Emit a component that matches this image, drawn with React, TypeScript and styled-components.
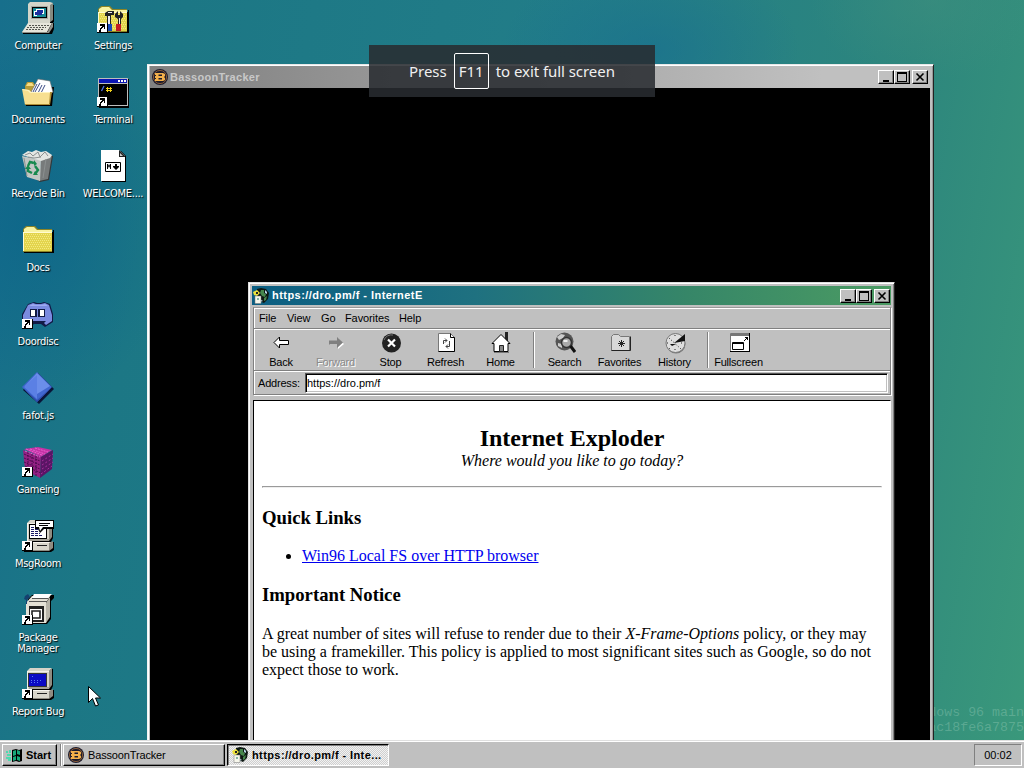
import * as React from 'react'
import styled, { createGlobalStyle, css } from 'styled-components'

const Shortcut: React.FunctionComponent = () => (
  <g>
    <path fill='#fff' d='M0 21h10v10H0z' />
    <path fill='#000' d='M3 22h5v5H7v-2H6v1H5v1H4v3H2v-2h1v-2h1v-1h1v-1H3zM0 31h11V21h-1v9H0z' />
  </g>
)

const ComputerIcon = (
  <>
    <path fill='#000' d='M28 3h4v17l-4 3H9v-2h17z' />
    <path fill='#868a80' d='M27 1h4v17l-4 3z' />
    <path fill='#d4d5c9' d='M8 0h20l3 1-3 2v18H6V2z' />
    <path fill='#a9aba2' d='M9 4h17v13H9z' />
    <path fill='#000' d='M10 5h15v11H10z' />
    <path fill='#178a96' d='M11 6h13v9H11z' />
    <path fill='#fff' d='M14 7h8v5h-8zM12 9h3v5h-3z' />
    <path fill='#1c2f9e' d='M15 8h6v3h-6zM13 10h7v3h-7z' />
    <path fill='#000' d='M28 21h4v6l-2 5H1v-2l24-1z' />
    <path fill='#e6e5da' d='M6 21h24l-5 9H0z' />
    <path fill='#8f9189' d='M30 21h1v4l-4 6h-2z' />
    <path stroke='#55574f' strokeDasharray='2 1' d='M7 23.500h20M5 25.500h19M4 27.500h17' />
    <path fill='#8f9189' d='M0 30h26v1H0z' />
  </>
)

const FolderShape = (
  <>
    <path fill='#000' d='M2 29V8h29V6h1v23z' />
    <path fill='#8c8426' d='M1 5l3-3h9l3 3h14v23H1z' />
    <path fill='#f9f3a1' d='M2 5l3-2h7l3 3h15v2H2z' />
    <path fill='#e3d44c' d='M2 8h28v19H2z' />
    <path fill='#fffbd0' d='M1 8h29v1H2v18H1z' />
    <path stroke='#f3ea80' strokeDasharray='1 1' d='M3 10.500h26M4 12.500h26M3 14.500h26M4 16.500h26M3 18.500h26M4 20.500h26M3 22.500h26M4 24.500h26' />
  </>
)

const SettingsIcon = (
  <>
    <g transform='translate(0 2)'>{FolderShape}</g>
    <path fill='#222' d='M8 11l3-2h6v4h-3v10h-4V14H8zM18 12l3-3v4h2V9l3 3v3l-2 2v7h-3v-7l-3-2z' />
    <path fill='#eee' d='M11 14h2v8h-2zM22 16h1v7h-1zM11 10h4v1h-4z' />
    <path fill='#1648b8' d='M11 22h4v7h-4z' />
    <path fill='#c21c26' d='M19 22h5v7h-5z' />
    <Shortcut />
  </>
)

const DocumentsIcon = (
  <>
    <path fill='#000' d='M4 30V14h26v-3h2l-2 19z' />
    <path fill='#b79c38' d='M3 10l2-4h6l2 3h15v18H4z' />
    <path fill='#f6dc83' d='M4 10l2-3h4l2 3z' />
    <path fill='#fff' stroke='#666' strokeWidth='.6' d='M9 16l7-13 12 2 3 11-7 5z' />
    <path stroke='#3c4c86' d='M15 8l-4 8M18 7l-5 9M20 9l-4 8M23 9l-4 8' />
    <path fill='#f7df90' d='M0 13l7 1 2 2h20l-2 13H3z' />
    <path fill='#fff4bf' d='M0 13l7 1 2 2h20v1H8l-2-2-5-1z' />
    <path fill='#b08f36' d='M3 28h25v1H3zM28 16h2l-2 13h-1z' />
  </>
)

const BinIcon = (
  <>
    <path fill='#33383a' d='M27 6h4l-4 24-9 2-3-2z' />
    <path fill='#777b7b' d='M19 9l11-4-4 24-9 2z' />
    <path fill='#c2c7c4' d='M0 6l19 4-1 21-13-4z' />
    <path fill='#e3e6e3' d='M0 5l6-4 4 1 4-2 5 2 5-1 6 4-2 3-9 3z' />
    <path stroke='#8b9090' fill='none' d='M3 5l5-2 3 3 5-4 2 5 5-5 3 4M6 7l6 1 7-1M2 8l3 18M24 9l-3 19' />
    <path fill='none' stroke='#17894e' strokeWidth='2.400' d='M6 16l2-4 4 1M13 16l3 4-3 4M10 23l-4-2 0-3' />
    <path fill='#17894e' d='M12 10v6l3-2zM16 25h-5l2-4zM3 19l3-4 3 4z' />
  </>
)

const FolderIcon = FolderShape

const DoorIcon = (
  <>
    <path fill='#111a45' d='M6 6l6-2 3 1h4l3-1 6 2 3 10v8l-8 5-4-3h-7l-4 3-8-5v-8z' />
    <path fill='#7b8be0' d='M6 7l5-2 3 1h5l4-1 4 2 3 10v6l-6 4-2-2 2-2H8l2 2-2 2-7-4v-6z' />
    <path fill='#9eabf0' d='M7 8l4-2 3 1h5l4-1 3 2z' />
    <path fill='#111a45' d='M8 11h7v8H8zM16 11h7v8h-7z' />
    <path fill='#fff' d='M9 12h4v6H9zM18 12h4v6h-4z' />
    <Shortcut />
  </>
)

const DiamondIcon = (
  <>
    <path fill='#0a1538' d='M16 1l16 16-15 15L1 18z' />
    <path fill='#4167cf' d='M15 0l15 15-15 15L0 15z' />
    <path fill='#6b8eea' d='M15 1l13 13-13 8L3 14z' />
    <path fill='#5b80e4' d='M15 3v24L2 15z' />
    <path fill='#2f4fae' d='M1 16l14 14 15-15-15 13z' />
  </>
)

const CubeIcon = (
  <>
    <path fill='#c531a6' d='M2 3l14-2 14 3-11 7z' />
    <path fill='#942184' d='M1 4l18 7-1 21L3 24z' />
    <path fill='#5a1465' d='M19 11l12-7-1 19-12 9z' />
    <path stroke='#e566cd' strokeDasharray='2 1' fill='none' d='M4 3l16 6M8 3l15 5M13 2l13 4M3 5l15 6' />
    <path stroke='#4b0d4e' strokeDasharray='2 1' fill='none' d='M2 8l16 7M2 12l16 7M2 16l16 7M3 20l16 7M6 6v20M10 8v20M14 10v20' />
    <path stroke='#a72f9b' strokeDasharray='2 2' fill='none' d='M20 15l11-7M20 19l11-7M20 23l11-7M19 28l11-8' />
    <Shortcut />
  </>
)

const PcBody = (
  <>
    <path fill='#000' d='M6 4h23l1-3h1v17l-2 4h3v8l-3 2H2v-2h4z' />
    <path fill='#d6d3c8' d='M5 3l3-3h22l-3 3v18H5z' />
    <path fill='#f2f0e8' d='M5 3h22v1H6v17H5z' />
    <path fill='#8f8c82' d='M27 3l3-3v17l-3 4z' />
    <path fill='#a5a298' d='M7 19h20v2H7z' />
    <path fill='#d9d6cb' d='M4 22h26l-3 2v6H3z' />
    <path fill='#f7f5ee' d='M4 22h25l-2 1H4z' />
    <path fill='#8f8c82' d='M27 23l4-2v7l-4 3H3v-1h24z' />
    <path fill='#222' d='M15 25h10v1H15z' />
  </>
)

const MsgIcon = (
  <>
    {PcBody}
    <path fill='#000' d='M7 4h18v15H7z' />
    <path fill='#fff' d='M8 5h16v13H8z' />
    <path stroke='#1a1a66' strokeDasharray='3 1' d='M9 7.500h7M9 9.500h8M9 11.500h7M9 13.500h9M9 15.500h12' />
    <path fill='#000' d='M13 0h19v9H22l-4 4-2-4h-3z' />
    <path fill='#fff' d='M14 1h17v6H21l-3 4-1-4h-3z' />
    <path fill='#000' d='M17 3h11v1H17zM17 5h9v1h-9z' />
    <Shortcut />
  </>
)

const PackageIcon = (
  <>
    <path fill='#000' d='M6 5l4-4h22v3l-3 3v18l-4 5H6z' />
    <path fill='#e4e1d6' d='M4 9l6-7h18l-4 7v20H4z' />
    <path fill='#b7b4a9' d='M24 9l4-6v20l-4 6z' />
    <path fill='#fff' d='M12 0h18l-4 4H10z' />
    <path stroke='#555' d='M7 7.500h18M10 4.500h16' />
    <path fill='#15406f' d='M3 2l3-2 2 3-3 3v4H4V6L2 5z' />
    <path fill='#222' d='M7 12h15v16H7z' />
    <path fill='#fff' d='M8 15h12v11H8z' />
    <path fill='none' stroke='#222' strokeWidth='1.600' d='M10 17h8v7h-8z' />
    <Shortcut />
  </>
)

const BugIcon = (
  <>
    {PcBody}
    <path fill='#333' d='M6 5h19v14H6z' />
    <path fill='#0a0ac4' d='M7 6h17v12H7z' />
    <path stroke='#5b7bf0' strokeDasharray='1 2' d='M10 8.500h2M9 12.500h11M9 14.500h9' />
    <Shortcut />
  </>
)

const TerminalIcon = (
  <>
    <path fill='#000' d='M2 3h30v29H2z' />
    <path fill='#bdbdbd' d='M1 2h30v28H1z' />
    <path fill='#0b15b4' d='M2 3h28v4H2z' />
    <path fill='#fff' d='M21 4h2v2h-2zM24 4h2v2h-2zM27 4h2v2h-2z' />
    <path fill='#000' d='M2 8h28v21H2z' />
    <path stroke='#4f72f0' strokeWidth='1.200' d='M4.500 15L7 10' />
    <path stroke='#f3d21b' d='M9 12.500h6M9 14.500h6M10.500 11v5M13.500 11v5' />
    <Shortcut />
  </>
)

const MarkdownIcon = (
  <>
    <path fill='#000' d='M5 1h19l5 5v26H5z' />
    <path fill='#fff' d='M4 0h18l6 6v25H4z' />
    <path fill='#222' d='M22 0l6 6v1h-6z' />
    <path fill='#ccc' d='M23 3l3 3h-3z' />
    <path fill='#fff' stroke='#000' d='M8.500 12.500h15v9h-15z' />
    <path fill='#000' d='M10 19v-5h1l1 2 1-2h1v5h-1v-3l-1 2-1-2v3zM18 14h2v2h2v1l-3 3-3-3v-1h2z' />
  </>
)

const BassoonIcon: React.FunctionComponent = () => (
  <Glyph width='16' height='16' viewBox='0 0 16 16'>
    <circle cx='8' cy='8' r='8' fill='#1c1b2c' />
    <circle cx='8' cy='8' r='6.600' fill='none' stroke='#a06a3c' strokeWidth='.8' />
    <path fill='#f4b04a' fillRule='evenodd' d='M3 4h8l2 1v2l-1 1 1 1v2l-2 1H3v-2h1V9H3V7h1V6H3zM6.500 5.500v1.500H10V5.500zM6.500 9v1.500H10V9z' />
  </Glyph>
)

const GlobeIcon: React.FunctionComponent = () => (
  <Glyph width='16' height='16' viewBox='0 0 16 16'>
    <path fill='#0d1712' d='M4 1l4-1 5 1 3 4-1 6-4 4-7-3z' />
    <path fill='#46864c' d='M8 2h3v3l2 1-1 3-3-1-2-3zM11 10l3-2-1 4-2 1z' />
    <path fill='#b9d6e8' d='M12 2l2 2v2l-2-1zM7 11l3 2-3 1z' />
    <path fill='#ede23c' d='M0 4l4-2 3 3-3 3-3-1z' />
    <path fill='#222' d='M3 4h2v2H3z' />
    <path fill='#f7f7ec' stroke='#777' strokeWidth='.5' d='M2 8h6v7.500H2z' />
    <path fill='#86b7a5' d='M4 10h2v2H4z' />
  </Glyph>
)

const FlagIcon: React.FunctionComponent = () => (
  <Glyph width='16' height='16' viewBox='0 0 16 16'>
    <path fill='#000' d='M6 3l4-1 3 1 3-1v12l-3 1-3-1-4 1z' />
    <path fill='#17a97a' d='M7 4l3-1v5l-3 1zM11 3l3 1v4l-3-1zM7 10l3-1v4l-3 1zM11 9l3 1v4l-3-1z' />
    <path fill='#4fd9ae' d='M0 4h2v2H0zM3 3h2v3H3zM1 7h4v2H1zM0 10h5v4H2v-2H0z' />
  </Glyph>
)

interface DesktopItem {
  label: string
  art: React.ReactNode
}

const items: DesktopItem[] = [
  { label: 'Computer', art: ComputerIcon },
  { label: 'Documents', art: DocumentsIcon },
  { label: 'Recycle Bin', art: BinIcon },
  { label: 'Docs', art: FolderIcon },
  { label: 'Doordisc', art: DoorIcon },
  { label: 'fafot.js', art: DiamondIcon },
  { label: 'Gameing', art: CubeIcon },
  { label: 'MsgRoom', art: MsgIcon },
  { label: 'Package Manager', art: PackageIcon },
  { label: 'Report Bug', art: BugIcon },
  { label: 'Settings', art: SettingsIcon },
  { label: 'Terminal', art: TerminalIcon },
  { label: 'WELCOME....', art: MarkdownIcon }
]

interface Tool {
  label: string
  art: React.ReactNode
  disabled?: boolean
  split?: boolean
}

const tools: Tool[] = [
  {
    label: 'Back',
    art: <path fill='#fff' stroke='#000' d='M4 10.500l5.500-5.500v3.500h9v4h-9V16z' />
  },
  {
    label: 'Forward',
    disabled: true,
    art: (
      <>
        <path fill='#fff' d='M19 12l-6-6v3H5v4h8v4z' />
        <path fill='#808080' d='M18 10.500L12 5v3.500H4v4h8V16z' />
      </>
    )
  },
  {
    label: 'Stop',
    art: (
      <>
        <circle cx='11.500' cy='11' r='9.500' fill='#222' />
        <path fill='none' stroke='#777' d='M4 8a8 8 0 0 1 9-5' />
        <path stroke='#fff' strokeWidth='2.200' d='M8 7.500l7 7M15 7.500l-7 7' />
      </>
    )
  },
  {
    label: 'Refresh',
    art: (
      <>
        <path fill='#fff' stroke='#777' d='M3.500 1.500h12l4 4v14h-16z' />
        <path fill='none' stroke='#000' d='M15.500 1.500v4h4v14h-16' />
        <path fill='none' stroke='#444' d='M8.500 12V8.500H12M10 6.500l2 2-2 2M14.500 9v5.500H11M13 12.500l-2 2 2 2' />
      </>
    )
  },
  {
    label: 'Home',
    art: (
      <>
        <path fill='#222' d='M15 0h3v9h-3z' />
        <path fill='#fff' stroke='#000' d='M2 11.500l9-9 9 9h-2v8H4v-8z' />
        <path fill='#888' stroke='#222' d='M9.500 13.500h4v6h-4z' />
        <path stroke='#777' d='M4 20.500h15' />
      </>
    )
  },
  {
    label: 'Search',
    split: true,
    art: (
      <>
        <circle cx='10.500' cy='9.500' r='9' fill='#555' />
        <path fill='#ccc' d='M3 5l4-3 4 1-2 3-4 2zM4 11l4 1v4l-4-2z' />
        <circle cx='12.500' cy='10.500' r='5' fill='#aaa' stroke='#333' strokeWidth='1.500' />
        <path fill='#eee' d='M9.500 8h4v2h-4z' />
        <path stroke='#111' strokeWidth='3' d='M16.500 14l4.500 6' />
      </>
    )
  },
  {
    label: 'Favorites',
    art: (
      <>
        <path fill='#d8d8d8' stroke='#777' d='M2.500 4.500l2-2h5l2 2h9v14h-18z' />
        <path fill='none' stroke='#222' d='M21.500 4.500v14h-19M9 11.500h7M12.500 8v7M10 9l5 5M15 9l-5 5' />
      </>
    )
  },
  {
    label: 'History',
    art: (
      <>
        <circle cx='12' cy='12' r='9.500' fill='#777' />
        <circle cx='11.500' cy='11' r='9.500' fill='#dedede' stroke='#777' />
        <path stroke='#222' strokeDasharray='1 2' fill='none' d='M5 6l12 11M11 3v3M3 11h3M17 11h3M11 17v3M5 17l2-2' />
        <path fill='#111' d='M10 11l11-9v7zM6 12h6l-4 2z' />
      </>
    )
  },
  {
    label: 'Fullscreen',
    split: true,
    art: (
      <>
        <path fill='#fff' stroke='#777' d='M2.500 1.500h19v18h-19z' />
        <path fill='#000' d='M21 1h1v19H2v-1h19z' />
        <path fill='#777' d='M3 2h18v2H3z' />
        <path fill='#fff' stroke='#000' d='M4.500 10.500h11v7h-11z' />
        <path stroke='#000' d='M4 11.500h12M16 9l4-4M17 5.500h3M19.500 5v3' />
      </>
    )
  }
]

const WindowButtons: React.FunctionComponent = () => (
  <Controls>
    <ControlButton>
      <svg width='12' height='10'><path fill='#000' d='M3 8h6v2H3z' /></svg>
    </ControlButton>
    <ControlButton>
      <svg width='12' height='10'><path fill='#000' fillRule='evenodd' d='M1 0h10v10H1zM2 2v7h8V2z' /></svg>
    </ControlButton>
    <ControlButton $apart>
      <svg width='12' height='10'><path stroke='#000' strokeWidth='1.600' d='M2.500 1.500l7 7M9.500 1.500l-7 7' /></svg>
    </ControlButton>
  </Controls>
)

const App: React.FunctionComponent = () => (
  <Screen>
    <GlobalStyle />
    <Desktop>
      <IconGrid>
        {items.map(({ label, art }) => (
          <IconCell key={label}>
            <Art width='32' height='32' viewBox='0 0 32 32'>{art}</Art>
            <IconLabel>{label}</IconLabel>
          </IconCell>
        ))}
      </IconGrid>
      <Build>
        Windows 96 main
        <br />
        ac18fe6a7875
      </Build>

      <TrackerWindow>
        <TitleBar $height={22}>
          <BassoonIcon />
          <Title>BassoonTracker</Title>
          <WindowButtons />
        </TitleBar>
        <TrackerBody />
      </TrackerWindow>

      <BrowserWindow>
        <TitleBar $active $height={19}>
          <GlobeIcon />
          <Title>https://dro.pm/f - InternetE</Title>
          <WindowButtons />
        </TitleBar>
        <Bars>
          <MenuBar>
            <MenuItem $width={28}>File</MenuItem>
            <MenuItem $width={34}>View</MenuItem>
            <MenuItem $width={24}>Go</MenuItem>
            <MenuItem $width={54}>Favorites</MenuItem>
            <MenuItem $width={30}>Help</MenuItem>
          </MenuBar>
          <ToolBar>
            {tools.map(({ label, art, disabled, split }) => (
              <React.Fragment key={label}>
                {split && <Divider />}
                <ToolButton $disabled={disabled}>
                  <svg width='22' height='22' viewBox='0 0 22 22'>{art}</svg>
                  {label}
                </ToolButton>
              </React.Fragment>
            ))}
          </ToolBar>
          <AddressBar>
            <AddressLabel>Address:</AddressLabel>
            <AddressField>https://dro.pm/f</AddressField>
          </AddressBar>
        </Bars>
        <Page>
          <PageHead>
            <h2>Internet Exploder</h2>
            <i>Where would you like to go today?</i>
          </PageHead>
          <hr />
          <h3>Quick Links</h3>
          <ul>
            <li><a href='#'>Win96 Local FS over HTTP browser</a></li>
          </ul>
          <h3>Important Notice</h3>
          <p>
            A great number of sites will refuse to render due to their <i>X-Frame-Options</i> policy,
            or they may be using a framekiller. This policy is applied to most significant sites such
            as Google, so do not expect those to work.
          </p>
        </Page>
      </BrowserWindow>

      <Cursor width='13' height='22' viewBox='0 0 13 22'>
        <path fill='#fff' stroke='#000' d='M.5.500v16l4-4 3 7.500 3-1-3-7h5z' />
      </Cursor>
    </Desktop>

    <TaskBar>
      <StartButton>
        <FlagIcon />
        Start
      </StartButton>
      <TaskDivider />
      <Task>
        <BassoonIcon />
        BassoonTracker
      </Task>
      <Task $active>
        <GlobeIcon />
        https://dro.pm/f - Inte...
      </Task>
      <Clock>00:02</Clock>
    </TaskBar>

    <Notice>
      Press
      <Key>F11</Key>
      to exit full screen
    </Notice>
  </Screen>
)

export { App as default }

const GlobalStyle = createGlobalStyle`
  body {
    margin: 0;
    overflow: hidden;
  }
`

const raised = css`
  border: 1px solid;
  border-color: #fff #000 #000 #fff;
  box-shadow: inset -1px -1px #808080;
`

const Screen = styled.div`
  position: relative;
  display: flex;
  flex-direction: column;
  width: 1024px;
  height: 768px;
  overflow: hidden;
  font: 11px/13px 'Liberation Sans', Arial, sans-serif;
  color: #000;
`

const Desktop = styled.div`
  position: relative;
  flex: 1;
  overflow: hidden;
  background:
    radial-gradient(ellipse 150px 190px at 30px 220px, rgba(10, 98, 138, 0.65), transparent),
    radial-gradient(ellipse 150px 90px at 650px 50px, rgba(24, 110, 144, 0.6), transparent),
    radial-gradient(ellipse 120px 80px at 930px 0, rgba(64, 144, 126, 0.5), transparent),
    linear-gradient(100deg, #176f8c 0%, #1c7785 16%, #227d88 50%, #2d867d 80%, #3a987b 100%);
`

const IconGrid = styled.div`
  display: grid;
  grid-auto-flow: column;
  grid-template-rows: repeat(10, 74px);
  grid-template-columns: 75px 75px;
  width: 150px;
  padding-top: 2px;
`

const IconCell = styled.div`
  display: flex;
  flex-direction: column;
  align-items: center;
  gap: 6px;
`

const Art = styled.svg`
  display: block;
  flex: none;
  overflow: visible;
`

const IconLabel = styled.span`
  max-width: 68px;
  padding-left: 1px;
  font: 11px/11px 'DejaVu Sans Condensed', 'DejaVu Sans', sans-serif;
  font-stretch: condensed;
  letter-spacing: -0.3px;
  text-align: center;
  color: #fff;
  text-shadow: 1px 1px 1px #000;
`

const Build = styled.div`
  position: absolute;
  right: 0;
  bottom: 5px;
  font: 13.3px/15px 'Liberation Mono', monospace;
  text-align: right;
  color: rgba(170, 215, 195, 0.32);
`

const Frame = styled.div`
  position: absolute;
  box-sizing: border-box;
  display: flex;
  flex-direction: column;
  background: #c0c0c0;
`

const TrackerWindow = styled(Frame)`
  left: 147px;
  top: 64px;
  width: 787px;
  height: 700px;
  padding: 1px;
  border: 1px solid;
  border-color: #e8e8e8 #222 #222 #f4f4f4;
  box-shadow: inset 1px 1px #fff, inset -1px -1px #999;
`

const TrackerBody = styled.div`
  flex: 1;
  margin: 0 2px 0 1px;
  background: #000;
`

const BrowserWindow = styled(Frame)`
  left: 248px;
  top: 282px;
  width: 647px;
  height: 500px;
  padding: 3px;
  border: 1px solid;
  border-color: #dfdfdf #222 #222 #dfdfdf;
  box-shadow: inset 1px 1px #fff, inset -1px -1px #808080;
`

const TitleBar = styled.div<{ $active?: boolean, $height: number }>`
  display: flex;
  align-items: center;
  flex: none;
  height: ${({ $height }) => $height}px;
  margin: 0 1px;
  padding: 0 3px 0 2px;
  gap: 2px;
  letter-spacing: 0.3px;
  color: #c8c8c8;
  background: linear-gradient(90deg, #808080, #c0c0c0 86%);

  ${({ $active }) => $active && css`
    margin: 0;
    padding: 0 1px;
    gap: 3px;
    letter-spacing: 0.45px;
    color: #fff;
    background: linear-gradient(90deg, #0b5e82, #1f7180 35%, #368668 68%, #4b9b63);
  `}
`

const Title = styled.span`
  flex: 1;
  font-weight: bold;
  white-space: nowrap;
`

const Controls = styled.div`
  display: flex;
`

const ControlButton = styled.span<{ $apart?: boolean }>`
  ${raised}
  display: flex;
  align-items: center;
  justify-content: center;
  box-sizing: border-box;
  width: 16px;
  height: 14px;
  margin-left: ${({ $apart }) => $apart ? 2 : 0}px;
  background: #c0c0c0;
`

const Glyph = styled.svg`
  display: block;
  flex: none;
`

const Bars = styled.div`
  display: flex;
  flex-direction: column;
  flex: none;
  margin: 2px 0 0 1px;
  border: 1px solid #808080;
  border-top-color: #999;
  box-shadow: inset 1px 1px #fff, 1px 1px #fff;
`

const MenuBar = styled.div`
  display: flex;
  align-items: center;
  height: 20px;
  padding-left: 5px;
  border-bottom: 1px solid #808080;
`

const MenuItem = styled.span<{ $width: number }>`
  width: ${({ $width }) => $width}px;
  letter-spacing: -0.1px;
`

const ToolBar = styled.div`
  display: flex;
  height: 40px;
  border-top: 1px solid #fff;
  border-bottom: 1px solid #808080;
`

const ToolButton = styled.div<{ $disabled?: boolean }>`
  display: flex;
  flex-direction: column;
  align-items: center;
  width: 55px;
  padding-top: 2px;
  gap: 2px;
  letter-spacing: -0.2px;
  color: ${({ $disabled }) => $disabled ? '#8a8a8a' : '#000'};
  text-shadow: ${({ $disabled }) => $disabled ? '1px 1px #fff' : 'none'};

  &:first-child {
    width: 54px;
  }
`

const Divider = styled.span`
  width: 1px;
  margin: 2px 3px 2px 5px;
  background: #808080;
  box-shadow: 1px 0 #fff;
`

const AddressBar = styled.div`
  display: flex;
  align-items: center;
  height: 22px;
  border-top: 1px solid #fff;
  padding: 0 2px 0 4px;
`

const AddressLabel = styled.span`
  width: 47px;
  letter-spacing: -0.2px;
`

const AddressField = styled.div`
  flex: 1;
  box-sizing: border-box;
  height: 20px;
  padding: 3px 0 0 1px;
  border: 1px solid;
  border-color: #555 #fff #fff #555;
  box-shadow: inset 1px 1px #000, inset -1px -1px #c0c0c0;
  background: #fff;
`

const Page = styled.div`
  flex: 1;
  margin: 5px 0 0 1px;
  padding: 24px 8px 0;
  border: 1px solid;
  border-color: #000 #fff #fff #000;
  background: #fff;
  font: 16px/18px 'Liberation Serif', 'Times New Roman', serif;

  hr {
    margin: 16px 0 0;
  }

  h3 {
    margin: 19px 0;
    font-size: 18.72px;
    line-height: 21px;
  }

  ul {
    margin: 0;
    padding-left: 40px;
  }

  p {
    margin: 20px 0 0;
  }

  a {
    color: #0000ee;
  }
`

const PageHead = styled.div`
  text-align: center;

  h2 {
    margin: 0;
    font-size: 24px;
    line-height: 27px;
  }
`

const Cursor = styled.svg`
  position: absolute;
  left: 88px;
  top: 686px;
`

const TaskBar = styled.div`
  display: flex;
  box-sizing: border-box;
  height: 28px;
  padding: 2px 2px 2px;
  border-top: 1px solid #dfdfdf;
  background: #c0c0c0;
  box-shadow: inset 0 1px #fff;
`

const BarButton = styled.div`
  ${raised}
  display: flex;
  align-items: center;
  box-sizing: border-box;
  height: 22px;
  margin-top: 1px;
  padding-left: 4px;
  gap: 4px;
  white-space: nowrap;
`

const StartButton = styled(BarButton)`
  width: 55px;
  padding-left: 3px;
  gap: 4px;
  font-weight: bold;
`

const TaskDivider = styled.span`
  width: 1px;
  height: 22px;
  margin: 1px 2px 0 3px;
  background: #808080;
  box-shadow: 1px 0 #fff;
`

const Task = styled(BarButton)<{ $active?: boolean }>`
  width: 162px;
  margin-right: 2px;
  letter-spacing: -0.15px;

  ${({ $active }) => $active && css`
    font-weight: bold;
    letter-spacing: 0.4px;
    border-color: #000 #fff #fff #000;
    box-shadow: inset 1px 1px #808080;
    background: repeating-conic-gradient(#f2f2f2 0 25%, #cfcfcf 0 50%) 0 0 / 2px 2px;
  `}
`

const Clock = styled.div`
  box-sizing: border-box;
  width: 48px;
  height: 22px;
  margin: 1px 0 0 auto;
  border: 1px solid;
  border-color: #808080 #fff #fff #808080;
  line-height: 20px;
  text-align: center;
`

const Notice = styled.div`
  position: absolute;
  left: 369px;
  top: 45px;
  display: flex;
  align-items: center;
  justify-content: center;
  box-sizing: border-box;
  width: 286px;
  height: 52px;
  gap: 7px;
  font: 15px/20px 'Noto Sans', sans-serif;
  letter-spacing: -0.05px;
  color: #f0f0f0;
  background: rgba(40, 44, 48, 0.87);
`

const Key = styled.span`
  box-sizing: border-box;
  width: 35px;
  height: 36px;
  border: 1px solid #fff;
  border-radius: 2px;
  line-height: 34px;
  text-align: center;
`
